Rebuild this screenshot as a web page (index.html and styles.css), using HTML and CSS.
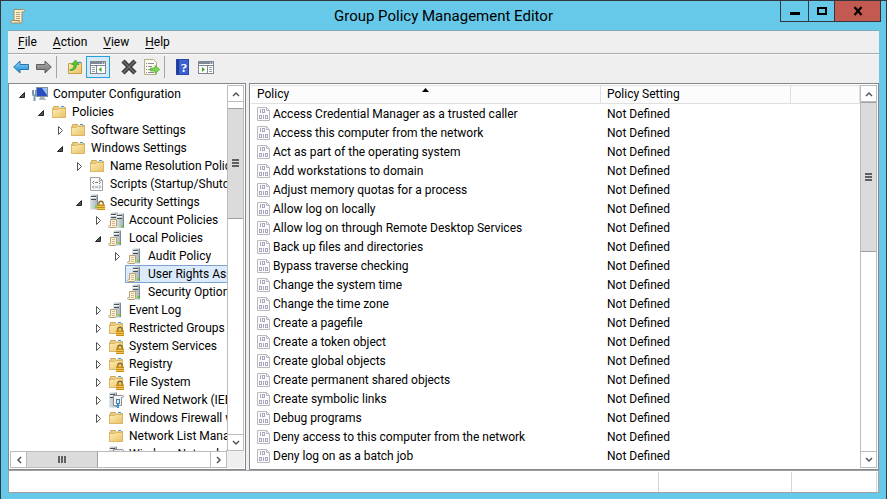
FILE: index.html
```
<!DOCTYPE html>
<html lang="en">

<head>
    <meta charset="UTF-8">
    <meta name="viewport" content="width=device-width, initial-scale=1.0">
    <title>Group Policy Management Editor</title>
    <link rel="stylesheet" href="styles.css">
</head>

<body>
    <!-- icon sprites -->
    <svg class="sprites" aria-hidden="true">
        <linearGradient id="g-folder" x1="0" y1="0" x2="1" y2="1">
            <stop offset="0" stop-color="#fdeeb5"/>
            <stop offset="1" stop-color="#e9c267"/>
        </linearGradient>
        <linearGradient id="g-blue" x1="0" y1="0" x2="0" y2="1">
            <stop offset="0" stop-color="#8fd6fa"/>
            <stop offset="1" stop-color="#1787d2"/>
        </linearGradient>
        <linearGradient id="g-gray" x1="0" y1="0" x2="0" y2="1">
            <stop offset="0" stop-color="#b5b5b5"/>
            <stop offset="1" stop-color="#6e6e6e"/>
        </linearGradient>
        <linearGradient id="g-server" x1="0" y1="0" x2="1" y2="0">
            <stop offset="0" stop-color="#dde4e8"/>
            <stop offset="1" stop-color="#a3afb7"/>
        </linearGradient>
        <symbol id="i-scroll" viewBox="0 0 16 16">
            <path d="M4 1.500h9.500c1.200 0 1.400 2.400 0 2.400H12v9.600c0 1-.6 1.500-1.500 1.500H2c-1.400-.2-1.400-2.500 0-2.500h2z" fill="#fbf0d2" stroke="#a58b5c"/>
            <path d="M2 12.500h7.500c.1 1.700.6 2.500 1.300 2.500" fill="#e6cf9c" stroke="#a58b5c"/>
            <path d="M6 4.500h4M6 6.500h4M6 8.500h4M6 10.500h4" stroke="#b49d74"/>
        </symbol>
        <symbol id="i-folder" viewBox="0 0 16 16">
            <path d="M2.500 3.500V2.500h5l1 1h6v10h-13v-9h1z" fill="#e9cd85" stroke="#cfa755"/>
            <path d="M8 2.500h5" stroke="#fff" stroke-width="2"/>
            <path d="M10 2.500h3" stroke="#3f9ae0"/>
            <path d="M1.500 5.500h5l1-1h7v9h-13z" fill="url(#g-folder)" stroke="#dcb664"/>
        </symbol>
        <symbol id="i-lock" viewBox="0 0 16 16">
            <path d="M9.800 11V9.500c0-3 4.400-3 4.400 0V11" fill="none" stroke="#8a6a1a" stroke-width="1.300"/>
            <rect x="8" y="10.500" width="8" height="5.500" fill="#c98d16"/>
            <path d="M8 12.500h8M8 14.500h8" stroke="#eec45a"/>
        </symbol>
        <symbol id="i-folder-lock" viewBox="0 0 16 16">
            <use href="#i-folder"/>
            <use href="#i-lock"/>
        </symbol>
        <symbol id="i-tower" viewBox="0 0 16 16">
            <path d="M5 1.500L6 .5h7v14l-1 1H5z" fill="url(#g-server)"/>
            <path d="M12 1.500l1-1v14l-1 1z" fill="#7b8790"/>
            <path d="M6 2.500h5M6 5.500h5" stroke="#44505a"/>
            <path d="M6 3.500h5" stroke="#fff"/>
            <rect x="10" y="12" width="2" height="2" fill="#5fe01f"/>
        </symbol>
        <symbol id="i-paper" viewBox="0 0 16 16">
            <path d="M2.500 7.500h6v6c0 1-.5 2-1.500 2H1.500c-1.200 0-1.200-2 0-2h1z" fill="#fcf3d6" stroke="#b59f74"/>
            <path d="M4 9.500h3M4 11.500h3M4 13.500h3" stroke="#cdb98d"/>
        </symbol>
        <symbol id="i-server" viewBox="0 0 16 16">
            <use href="#i-tower"/>
            <use href="#i-paper"/>
        </symbol>
        <symbol id="i-servers" viewBox="0 0 16 16">
            <use href="#i-tower" x="-3"/>
            <use href="#i-tower" x="3" y="1"/>
            <use href="#i-paper"/>
        </symbol>
        <symbol id="i-server-lock" viewBox="0 0 16 16">
            <use href="#i-tower" x="-4"/>
            <use href="#i-lock"/>
        </symbol>
        <symbol id="i-wired" viewBox="0 0 16 16">
            <use href="#i-tower" x="-4"/>
            <path d="M5.500 3.500h9c1.300 0 1.300 2 0 2h-1v8h-8z" fill="#f3f3f3" stroke="#8b8f94"/>
            <rect x="8.500" y="7.500" width="3" height="4" fill="#d8eefa" stroke="#4b7fa3"/>
            <path d="M10 12v4" stroke="#2e9bd6" stroke-width="2"/>
        </symbol>
        <symbol id="i-computer" viewBox="0 0 16 16">
            <rect x="4.500" y="1.500" width="11" height="9" fill="#2a4fc4" stroke="#8792a0"/>
            <path d="M10 2h5v7z" fill="#9cc4f6"/>
            <path d="M8 11h4l2 3H7z" fill="#aab2ba"/>
            <path d="M1 4v4c0 2 3 2 3 0V4M2.500 9v6" fill="none" stroke="#7a97ad" stroke-width="2"/>
        </symbol>
        <symbol id="i-script" viewBox="0 0 16 16">
            <path d="M1.500 1.500h9l3 3v10h-12z" fill="#fafafa" stroke="#a0a0a0"/>
            <path d="M10.500 1.500v3h3" fill="none" stroke="#a0a0a0"/>
            <path d="M5 5L3.500 6.500 5 8M10 5l1.500 1.500L10 8M5 9.500L3.500 11 5 12.500M10 9.500l1.500 1.500-1.500 1.500M6 6.500h3M6 11h3" fill="none" stroke="#7d7d7d"/>
        </symbol>
        <symbol id="i-binary" viewBox="0 0 16 16">
            <path d="M.5 1.500h9l3 3v10H.5z" fill="#fbfbfb" stroke="#b9b9bd"/>
            <path d="M9.500 1.500v3h3" fill="none" stroke="#b9b9bd"/>
            <path d="M3.500 3v4M6.500 9v4" stroke="#a9a7bf"/>
            <rect x="5.500" y="3.500" width="2" height="3" fill="none" stroke="#a9a7bf"/>
            <rect x="2.500" y="9.500" width="2" height="3" fill="none" stroke="#a9a7bf"/>
            <rect x="8.500" y="9.500" width="2" height="3" fill="none" stroke="#a9a7bf"/>
        </symbol>
        <symbol id="i-back" viewBox="0 0 16 16">
            <path d="M.7 8L7 2v3.500h8.500v5H7V14z" fill="url(#g-blue)" stroke="#2874a8"/>
        </symbol>
        <symbol id="i-forward" viewBox="0 0 16 16">
            <path d="M15.300 8L9 2v3.500H.5v5H9V14z" fill="url(#g-gray)" stroke="#5d5d5d"/>
        </symbol>
        <symbol id="i-up" viewBox="0 0 16 16">
            <path d="M1.500 4.500h5l1-1h7v11h-13z" fill="url(#g-folder)" stroke="#c99f45"/>
            <path d="M11 3.500h3" stroke="#3f9ae0" stroke-width="1.500"/>
            <path d="M3 10.500c3 0 4-2 4-5H4.500L8.500 1l3.500 4.500H9.500c0 4-2 6-6.500 6z" fill="#55c52e" stroke="#2f8d1c" stroke-width=".6"/>
        </symbol>
        <symbol id="i-tree" viewBox="0 0 16 16">
            <rect x=".5" y="2.500" width="15" height="12" fill="#fff" stroke="#7f8894"/>
            <path d="M1 4h14" stroke="#7f8894" stroke-width="2"/>
            <path d="M12 4h1M14 4h1" stroke="#fff"/>
            <path d="M1 6.500h14M6.500 7v7" stroke="#7f8894"/>
            <path d="M2 8.500h3M2 10.500h3M2 12.500h3" stroke="#9aa2ad"/>
            <path d="M11.500 8v5L8.500 10.500z" fill="#3faa27"/>
        </symbol>
        <symbol id="i-pane" viewBox="0 0 16 16">
            <rect x=".5" y="2.500" width="15" height="12" fill="#fff" stroke="#7f8894"/>
            <path d="M1 4h14" stroke="#7f8894" stroke-width="2"/>
            <path d="M12 4h1M14 4h1" stroke="#fff"/>
            <path d="M1 6.500h14M9.500 7v7" stroke="#7f8894"/>
            <path d="M11 8.500h3M11 10.500h3M11 12.500h3" stroke="#9aa2ad"/>
            <path d="M4 8v5l3-2.500z" fill="#3faa27"/>
        </symbol>
        <symbol id="i-delete" viewBox="0 0 16 16">
            <path d="M2 2l12 12M14 2l-12 12" stroke="#3a3a3a" stroke-width="4.500"/>
            <path d="M2 2l12 12M14 2l-12 12" stroke="#6d6d6d" stroke-width="1.500"/>
        </symbol>
        <symbol id="i-export" viewBox="0 0 16 16">
            <path d="M.5.500h9l3 3v12H.5z" fill="#fdfbe9" stroke="#b5ad8a"/>
            <path d="M2 4.500h1M4 4.500h6M2 7.500h1M4 7.500h4M2 10.500h1M4 10.500h4M2 13.500h1M4 13.500h6" stroke="#8c8aa8"/>
            <path d="M6.500 9H11V6.500l4.700 4L11 14.500V12H6.500z" fill="#7ad84a" stroke="#3c9a20" stroke-width=".6"/>
        </symbol>
        <symbol id="i-help" viewBox="0 0 16 16">
            <rect x="1.500" y=".5" width="12" height="15" fill="#3b62cf" stroke="#2846a8"/>
            <path d="M3 1v14" stroke="#1f3a95" stroke-width="2"/>
            <text x="9" y="13" text-anchor="middle" class="help-mark">?</text>
        </symbol>
        <symbol id="i-open" viewBox="0 0 12 12">
            <path d="M8.500 4.500v5h-5z" fill="#555" stroke="#262626"/>
        </symbol>
        <symbol id="i-closed" viewBox="0 0 12 12">
            <path d="M4.500 2.500v8l4-4z" fill="#fff" stroke="#555"/>
        </symbol>
        <symbol id="i-chevron" viewBox="0 0 8 8">
            <path d="M1 6l3-3 3 3" fill="none" stroke="#555" stroke-width="1.500"/>
        </symbol>
    </svg>

    <div class="window">
        <header class="titlebar">
            <svg class="icon app-icon"><use href="#i-scroll"/></svg>
            <h1>Group Policy Management Editor</h1>
            <div class="window-buttons">
                <button type="button" class="minimize" aria-label="Minimize"><svg viewBox="0 0 10 10"><path d="M0 7.500h10" stroke="#000" stroke-width="3"/></svg></button>
                <button type="button" class="maximize" aria-label="Maximize"><svg viewBox="0 0 10 10"><rect x="1" y="2" width="8" height="6" fill="none" stroke="#000" stroke-width="2"/></svg></button>
                <button type="button" class="close" aria-label="Close"><svg viewBox="0 0 10 10"><path d="M1.500 1l7 8M8.500 1l-7 8" stroke="#000" stroke-width="2.200"/></svg></button>
            </div>
        </header>

        <div class="client">
            <nav class="menubar">
                <button type="button"><u>F</u>ile</button>
                <button type="button"><u>A</u>ction</button>
                <button type="button"><u>V</u>iew</button>
                <button type="button"><u>H</u>elp</button>
            </nav>

            <div class="toolbar">
                <button type="button" aria-label="Back"><svg class="icon"><use href="#i-back"/></svg></button>
                <button type="button" aria-label="Forward"><svg class="icon"><use href="#i-forward"/></svg></button>
                <span class="separator"></span>
                <button type="button" aria-label="Up one level"><svg class="icon"><use href="#i-up"/></svg></button>
                <button type="button" class="pressed" aria-label="Show console tree"><svg class="icon"><use href="#i-tree"/></svg></button>
                <span class="space"></span>
                <button type="button" aria-label="Delete"><svg class="icon"><use href="#i-delete"/></svg></button>
                <button type="button" aria-label="Export list"><svg class="icon"><use href="#i-export"/></svg></button>
                <span class="separator"></span>
                <button type="button" aria-label="Help"><svg class="icon"><use href="#i-help"/></svg></button>
                <button type="button" aria-label="Show action pane"><svg class="icon"><use href="#i-pane"/></svg></button>
            </div>

            <main class="panes">
                <section class="pane tree-pane">
                    <div class="tree-view">
                        <ul class="tree">
                            <li><div class="node"><button type="button" class="toggle" aria-label="Collapse"><svg><use href="#i-open"/></svg></button><span class="label"><svg class="icon"><use href="#i-computer"/></svg>Computer Configuration</span></div>
                                <ul>
                                    <li><div class="node"><button type="button" class="toggle" aria-label="Collapse"><svg><use href="#i-open"/></svg></button><span class="label"><svg class="icon"><use href="#i-folder"/></svg>Policies</span></div>
                                        <ul>
                                            <li><div class="node"><button type="button" class="toggle" aria-label="Expand"><svg><use href="#i-closed"/></svg></button><span class="label"><svg class="icon"><use href="#i-folder"/></svg>Software Settings</span></div></li>
                                            <li><div class="node"><button type="button" class="toggle" aria-label="Collapse"><svg><use href="#i-open"/></svg></button><span class="label"><svg class="icon"><use href="#i-folder"/></svg>Windows Settings</span></div>
                                                <ul>
                                                    <li><div class="node"><button type="button" class="toggle" aria-label="Expand"><svg><use href="#i-closed"/></svg></button><span class="label"><svg class="icon"><use href="#i-folder"/></svg>Name Resolution Policy</span></div></li>
                                                    <li><div class="node leaf"><span class="label"><svg class="icon"><use href="#i-script"/></svg>Scripts (Startup/Shutdown)</span></div></li>
                                                    <li><div class="node"><button type="button" class="toggle" aria-label="Collapse"><svg><use href="#i-open"/></svg></button><span class="label"><svg class="icon"><use href="#i-server-lock"/></svg>Security Settings</span></div>
                                                        <ul>
                                                            <li><div class="node"><button type="button" class="toggle" aria-label="Expand"><svg><use href="#i-closed"/></svg></button><span class="label"><svg class="icon"><use href="#i-servers"/></svg>Account Policies</span></div></li>
                                                            <li><div class="node"><button type="button" class="toggle" aria-label="Collapse"><svg><use href="#i-open"/></svg></button><span class="label"><svg class="icon"><use href="#i-server"/></svg>Local Policies</span></div>
                                                                <ul>
                                                                    <li><div class="node"><button type="button" class="toggle" aria-label="Expand"><svg><use href="#i-closed"/></svg></button><span class="label"><svg class="icon"><use href="#i-server"/></svg>Audit Policy</span></div></li>
                                                                    <li><div class="node leaf selected"><span class="label"><svg class="icon"><use href="#i-server"/></svg>User Rights Assignment</span></div></li>
                                                                    <li><div class="node leaf"><span class="label"><svg class="icon"><use href="#i-server"/></svg>Security Options</span></div></li>
                                                                </ul>
                                                            </li>
                                                            <li><div class="node"><button type="button" class="toggle" aria-label="Expand"><svg><use href="#i-closed"/></svg></button><span class="label"><svg class="icon"><use href="#i-server"/></svg>Event Log</span></div></li>
                                                            <li><div class="node"><button type="button" class="toggle" aria-label="Expand"><svg><use href="#i-closed"/></svg></button><span class="label"><svg class="icon"><use href="#i-folder-lock"/></svg>Restricted Groups</span></div></li>
                                                            <li><div class="node"><button type="button" class="toggle" aria-label="Expand"><svg><use href="#i-closed"/></svg></button><span class="label"><svg class="icon"><use href="#i-folder-lock"/></svg>System Services</span></div></li>
                                                            <li><div class="node"><button type="button" class="toggle" aria-label="Expand"><svg><use href="#i-closed"/></svg></button><span class="label"><svg class="icon"><use href="#i-folder-lock"/></svg>Registry</span></div></li>
                                                            <li><div class="node"><button type="button" class="toggle" aria-label="Expand"><svg><use href="#i-closed"/></svg></button><span class="label"><svg class="icon"><use href="#i-folder-lock"/></svg>File System</span></div></li>
                                                            <li><div class="node"><button type="button" class="toggle" aria-label="Expand"><svg><use href="#i-closed"/></svg></button><span class="label"><svg class="icon"><use href="#i-wired"/></svg>Wired Network (IEEE 802.3) Policies</span></div></li>
                                                            <li><div class="node"><button type="button" class="toggle" aria-label="Expand"><svg><use href="#i-closed"/></svg></button><span class="label"><svg class="icon"><use href="#i-folder"/></svg>Windows Firewall with Advanced Security</span></div></li>
                                                            <li><div class="node leaf"><span class="label"><svg class="icon"><use href="#i-folder"/></svg>Network List Manager Policies</span></div></li>
                                                            <li><div class="node leaf"><span class="label"><svg class="icon"><use href="#i-wired"/></svg>Wireless Network (IEEE 802.11) Policies</span></div></li>
                                                        </ul>
                                                    </li>
                                                </ul>
                                            </li>
                                        </ul>
                                    </li>
                                </ul>
                            </li>
                        </ul>
                    </div>
                    <div class="scrollbar vertical">
                        <button type="button" class="arrow" aria-label="Scroll up"><svg><use href="#i-chevron"/></svg></button>
                        <div class="track tree-track"><div class="thumb"><i></i><i></i><i></i></div></div>
                        <button type="button" class="arrow down" aria-label="Scroll down"><svg><use href="#i-chevron"/></svg></button>
                    </div>
                    <div class="scrollbar horizontal">
                        <button type="button" class="arrow left" aria-label="Scroll left"><svg><use href="#i-chevron"/></svg></button>
                        <div class="track"><div class="thumb"><i></i><i></i><i></i></div></div>
                        <button type="button" class="arrow right" aria-label="Scroll right"><svg><use href="#i-chevron"/></svg></button>
                    </div>
                    <div class="corner"></div>
                </section>

                <section class="pane list-pane">
                    <div class="list-view">
                        <table>
                            <colgroup>
                                <col class="col-policy">
                                <col class="col-setting">
                                <col>
                            </colgroup>
                            <thead>
                                <tr><th class="sorted">Policy<svg class="sort" viewBox="0 0 7 4"><path d="M3.500 0L7 4H0z"/></svg></th><th>Policy Setting</th><th></th></tr>
                            </thead>
                            <tbody>
                                <tr><td><svg class="icon"><use href="#i-binary"/></svg>Access Credential Manager as a trusted caller</td><td>Not Defined</td><td></td></tr>
                                <tr><td><svg class="icon"><use href="#i-binary"/></svg>Access this computer from the network</td><td>Not Defined</td><td></td></tr>
                                <tr><td><svg class="icon"><use href="#i-binary"/></svg>Act as part of the operating system</td><td>Not Defined</td><td></td></tr>
                                <tr><td><svg class="icon"><use href="#i-binary"/></svg>Add workstations to domain</td><td>Not Defined</td><td></td></tr>
                                <tr><td><svg class="icon"><use href="#i-binary"/></svg>Adjust memory quotas for a process</td><td>Not Defined</td><td></td></tr>
                                <tr><td><svg class="icon"><use href="#i-binary"/></svg>Allow log on locally</td><td>Not Defined</td><td></td></tr>
                                <tr><td><svg class="icon"><use href="#i-binary"/></svg>Allow log on through Remote Desktop Services</td><td>Not Defined</td><td></td></tr>
                                <tr><td><svg class="icon"><use href="#i-binary"/></svg>Back up files and directories</td><td>Not Defined</td><td></td></tr>
                                <tr><td><svg class="icon"><use href="#i-binary"/></svg>Bypass traverse checking</td><td>Not Defined</td><td></td></tr>
                                <tr><td><svg class="icon"><use href="#i-binary"/></svg>Change the system time</td><td>Not Defined</td><td></td></tr>
                                <tr><td><svg class="icon"><use href="#i-binary"/></svg>Change the time zone</td><td>Not Defined</td><td></td></tr>
                                <tr><td><svg class="icon"><use href="#i-binary"/></svg>Create a pagefile</td><td>Not Defined</td><td></td></tr>
                                <tr><td><svg class="icon"><use href="#i-binary"/></svg>Create a token object</td><td>Not Defined</td><td></td></tr>
                                <tr><td><svg class="icon"><use href="#i-binary"/></svg>Create global objects</td><td>Not Defined</td><td></td></tr>
                                <tr><td><svg class="icon"><use href="#i-binary"/></svg>Create permanent shared objects</td><td>Not Defined</td><td></td></tr>
                                <tr><td><svg class="icon"><use href="#i-binary"/></svg>Create symbolic links</td><td>Not Defined</td><td></td></tr>
                                <tr><td><svg class="icon"><use href="#i-binary"/></svg>Debug programs</td><td>Not Defined</td><td></td></tr>
                                <tr><td><svg class="icon"><use href="#i-binary"/></svg>Deny access to this computer from the network</td><td>Not Defined</td><td></td></tr>
                                <tr><td><svg class="icon"><use href="#i-binary"/></svg>Deny log on as a batch job</td><td>Not Defined</td><td></td></tr>
                                <tr><td><svg class="icon"><use href="#i-binary"/></svg></td><td></td><td></td></tr>
                            </tbody>
                        </table>
                    </div>
                    <div class="scrollbar vertical">
                        <button type="button" class="arrow" aria-label="Scroll up"><svg><use href="#i-chevron"/></svg></button>
                        <div class="track list-track"><div class="thumb"><i></i><i></i><i></i></div></div>
                        <button type="button" class="arrow down" aria-label="Scroll down"><svg><use href="#i-chevron"/></svg></button>
                    </div>
                </section>
            </main>

            <footer class="statusbar">
                <span></span>
                <span></span>
                <span></span>
            </footer>
        </div>
    </div>
</body>

</html>
```

FILE: styles.css
```
* {
    box-sizing: border-box;
}

body {
    margin: 0;
    font-family: Roboto, "Open Sans", sans-serif;
    font-size: 12px;
    color: #000;
    overflow: hidden;
}

button {
    margin: 0;
    padding: 0;
    border: none;
    background: none;
    font: inherit;
    color: inherit;
}

ul {
    list-style: none;
    margin: 0;
    padding: 0;
}

.sprites {
    position: absolute;
    width: 0;
    height: 0;
}

.icon {
    width: 16px;
    height: 16px;
    flex: none;
}

.help-mark {
    font: bold 13px "Liberation Serif", serif;
    fill: #fff;
}

/* window frame */
.window {
    display: flex;
    flex-direction: column;
    height: 100vh;
    margin-right: 1px;
    padding: 0 7px 6px;
    border: 1px solid #33363d;
    border-bottom: none;
    background-color: #66c9ea;
}

.titlebar {
    display: grid;
    grid-template-columns: 1fr auto 1fr;
    align-items: center;
    height: 29px;
    flex: none;
}

.titlebar h1 {
    margin: 0;
    font-size: 15px;
    font-weight: normal;
    line-height: 20px;
}

.app-icon {
    margin-left: 2px;
}

.window-buttons {
    display: flex;
    align-self: start;
    justify-self: end;
    margin-right: -2px;
    border: 1px solid #33363d;
    border-top: none;
}

.window-buttons button {
    display: flex;
    align-items: center;
    justify-content: center;
    width: 27px;
    height: 20px;
}

.window-buttons button + button {
    width: 26px;
    border-left: 1px solid #33363d;
}

.window-buttons svg {
    width: 10px;
    height: 10px;
}

.window-buttons button.close {
    width: 46px;
    background-color: #c35a51;
}

.client {
    display: flex;
    flex-direction: column;
    flex: 1;
    min-height: 0;
    border-top: 1px solid #83a9b8;
    background-color: #efefef;
}

/* menu and toolbar */
.menubar {
    display: flex;
    gap: 16px;
    height: 23px;
    padding: 0 10px;
    border-bottom: 1px solid #a9abb3;
    flex: none;
}

.menubar u {
    text-underline-offset: 2px;
}

.toolbar {
    display: flex;
    align-items: center;
    height: 29px;
    padding: 0 1px 4px;
    border-top: 1px solid #f9f9f9;
    flex: none;
}

.toolbar button {
    display: flex;
    align-items: center;
    justify-content: center;
    width: 23px;
    height: 22px;
}

.toolbar .pressed {
    width: 24px;
    border: 1px solid #26a0da;
    background-color: #d5e9f7;
}

.separator {
    width: 1px;
    height: 22px;
    margin: 0 6px 0 1px;
    background-color: #a5a5a5;
}

.space {
    width: 7px;
}

/* panes */
.panes {
    display: grid;
    grid-template-columns: 238px 1fr;
    gap: 3px;
    flex: 1;
    min-height: 0;
}

.pane {
    display: grid;
    padding: 1px;
    border: 1px solid #828790;
    background-color: #fff;
    min-width: 0;
    min-height: 0;
}

.tree-pane {
    grid-template-columns: 1fr 17px;
    grid-template-rows: 1fr 17px;
}

.list-pane {
    grid-template-columns: 1fr 17px;
    grid-template-rows: 1fr;
}

.tree-view,
.list-view {
    overflow: hidden;
    min-width: 0;
    min-height: 0;
}

.tree {
    padding-left: 6px;
}

.tree ul {
    padding-left: 19px;
}

.node {
    display: flex;
    height: 18px;
    white-space: nowrap;
}

.toggle {
    width: 14px;
    flex: none;
}

.toggle svg {
    display: block;
    width: 12px;
    height: 12px;
}

.label {
    display: flex;
    align-items: center;
    gap: 5px;
    flex: 1;
    min-width: 0;
    overflow: hidden;
    padding-left: 2px;
    line-height: 16px;
}

.leaf {
    padding-left: 14px;
}

.selected .label {
    border: 1px solid #7da2ce;
    border-right: none;
    padding-left: 1px;
    background-color: #dcebfc;
}

/* policy table */
table {
    width: 100%;
    table-layout: fixed;
    border-collapse: separate;
    border-spacing: 0;
}

.col-policy {
    width: 350px;
}

.col-setting {
    width: 190px;
}

th,
td {
    height: 19px;
    padding: 0 6px;
    line-height: 18px;
    text-align: left;
    font-weight: normal;
    white-space: nowrap;
}

th {
    line-height: 17px;
    border: 1px solid #e0e0e0;
    border-width: 1px 1px 1px 0;
    background-color: #fcfcfc;
}

.sorted {
    position: relative;
}

.sort {
    position: absolute;
    left: 50%;
    top: 2px;
    width: 7px;
    height: 4px;
    margin-left: -4px;
}

td .icon {
    vertical-align: middle;
}

/* scrollbars */
.scrollbar {
    display: flex;
}

.vertical {
    flex-direction: column;
}

.arrow {
    display: flex;
    align-items: center;
    justify-content: center;
    width: 17px;
    height: 17px;
    border: 1px solid #bcbcbc;
    flex: none;
}

.arrow svg {
    width: 8px;
    height: 8px;
}

.down svg {
    transform: rotate(180deg);
}

.left svg {
    transform: rotate(-90deg);
}

.right svg {
    transform: rotate(90deg);
}

.track {
    flex: 1;
    border: 0 solid #bcbcbc;
}

.vertical .track {
    width: 17px;
    border-width: 0 1px;
}

.horizontal .track {
    border-width: 1px 0;
}

.thumb {
    display: flex;
    align-items: center;
    justify-content: center;
    gap: 1px;
    border: 0 solid #a0a0a0;
    background-color: #dbdbdb;
}

.vertical .thumb {
    flex-direction: column;
    border-width: 1px 0;
}

.horizontal .thumb {
    width: 39%;
    height: 100%;
    border-width: 0 1px 0 0;
}

.thumb i {
    width: 7px;
    height: 2px;
    background-color: #606060;
}

.horizontal i {
    width: 2px;
    height: 7px;
}

.tree-track {
    padding-top: 6px;
}

.tree-track .thumb {
    height: 34%;
}

.list-track .thumb {
    height: 43%;
}

.corner {
    background-color: #efefef;
}

/* status bar */
.statusbar {
    display: grid;
    grid-template-columns: 1fr 133px 85px;
    height: 23px;
    padding: 1px 1px 0 0;
    border: 1px solid #a0a0a0;
    background-color: #fff;
    flex: none;
}

.statusbar span {
    border-right: 1px solid #d7d7d7;
}
```
